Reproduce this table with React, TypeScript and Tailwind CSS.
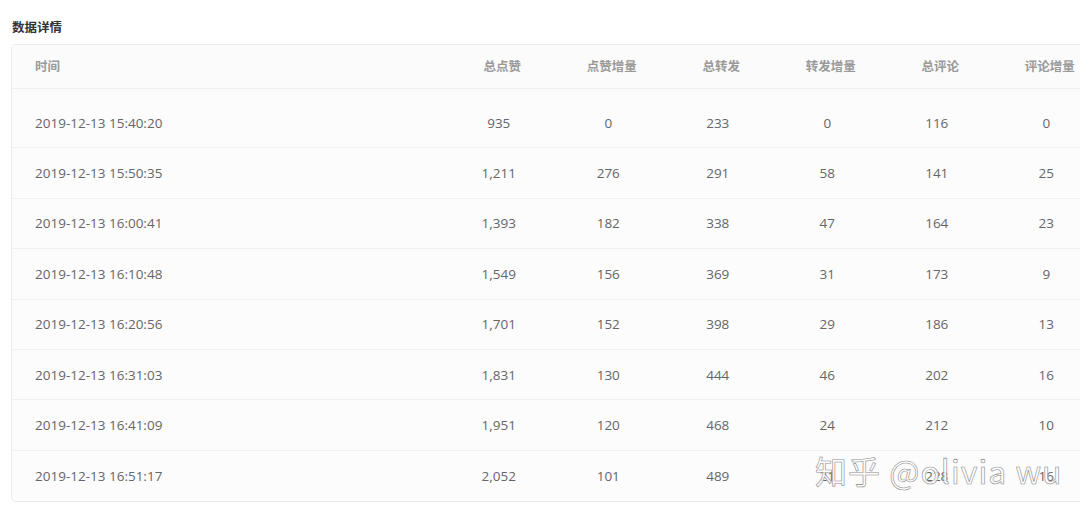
const rows = [
  ['2019-12-13 15:40:20', '935', '0', '233', '0', '116', '0'],
  ['2019-12-13 15:50:35', '1,211', '276', '291', '58', '141', '25'],
  ['2019-12-13 16:00:41', '1,393', '182', '338', '47', '164', '23'],
  ['2019-12-13 16:10:48', '1,549', '156', '369', '31', '173', '9'],
  ['2019-12-13 16:20:56', '1,701', '152', '398', '29', '186', '13'],
  ['2019-12-13 16:31:03', '1,831', '130', '444', '46', '202', '16'],
  ['2019-12-13 16:41:09', '1,951', '120', '468', '24', '212', '10'],
  ['2019-12-13 16:51:17', '2,052', '101', '489', '21', '228', '16'],
];

const headers = ['总点赞', '点赞增量', '总转发', '转发增量', '总评论', '评论增量'];

export default function App() {
  return (
    <div className="relative w-[1080px] h-[516px] overflow-hidden bg-white font-['Open_Sans','Noto_Sans_CJK_SC',sans-serif]">
      <div className="pl-[12px] pt-[19px]">
        <h2 className="text-[12.5px] leading-[18px] font-bold text-[#333]">数据详情</h2>
      </div>

      {/* Table card */}
      <div className="mt-[7px] ml-[11px] w-[1120px] border border-[#ececec] rounded-[4px] bg-[#fcfcfc]">
        <div className="flex h-[44px] items-center border-b border-[#efefef] bg-[#fbfbfb] pt-[2px]">
          <div className="w-[432px] pl-[23px] text-[12.5px] font-semibold text-[#9a9a9a]">时间</div>
          {headers.map((h) => (
            <div key={h} className="w-[109.5px] pl-[7px] text-center text-[12.5px] font-semibold text-[#9a9a9a]">
              {h}
            </div>
          ))}
        </div>
        <div className="pt-[9px]">
          {rows.map((r, i) => (
            <div
              key={r[0]}
              className={`flex h-[50.4px] items-center text-[13.5px] text-[#666] ${i < rows.length - 1 ? 'border-b border-[#f0f0f0]' : ''}`}
            >
              <div className="w-[432px] pl-[23px]">{r[0]}</div>
              {r.slice(1).map((v, j) => (
                <div key={j} className="w-[109.5px] text-center">
                  {v}
                </div>
              ))}
            </div>
          ))}
        </div>
      </div>

      {/* watermark */}
      <div className="absolute left-[815px] top-[450px] text-[32px] leading-[40px] text-white/85 font-['Noto_Sans_CJK_SC',sans-serif] [-webkit-text-stroke:0.6px_#8a8a8a] tracking-[1px]">
        知乎 @olivia wu
      </div>
    </div>
  );
}
